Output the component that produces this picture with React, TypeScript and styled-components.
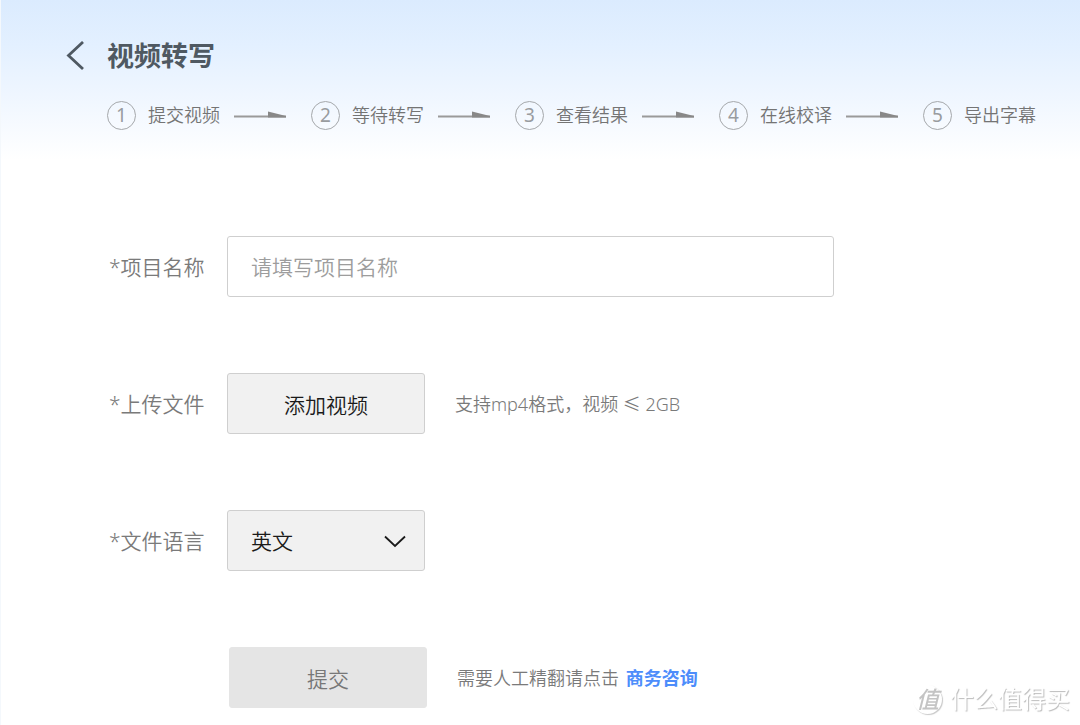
import React from "react";
import styled, { createGlobalStyle } from "styled-components";

const GlobalStyle = createGlobalStyle`
  * { box-sizing: border-box; }
  body {
    margin: 0;
    background: #fff;
    color: #7a7a7a;
    font-family: "Noto Sans", "Noto Sans CJK SC", sans-serif;
    font-weight: 350;
  }
  button, input, select { font: inherit; }
`;

const Page = styled.div`
  min-height: 100vh;
  border-left: 1px solid #f4f8fc;
  background: linear-gradient(#dbebfe 0, #e3f0ff 45px, #eff6ff 95px, #fff 160px) no-repeat;
`;

const Header = styled.header`
  padding: 36px 24px 0 64px;
`;

const TitleBar = styled.div`
  display: flex;
  align-items: center;
  gap: 22px;
  height: 40px;
`;

const BackButton = styled.button`
  display: flex;
  width: 20px;
  height: 30px;
  padding: 0;
  border: 0;
  background: none;
  color: #4f5962;
  cursor: pointer;
`;

const Title = styled.h1`
  margin: 0;
  color: #4f5962;
  font-size: 27px;
  font-weight: 700;
  line-height: 40px;
`;

const Steps = styled.ol`
  display: flex;
  gap: 24px;
  margin: 24px 0 0;
  padding: 0 0 0 42px;
  list-style: none;
`;

const Step = styled.li`
  display: flex;
  align-items: center;
  flex: none;
  height: 30px;
`;

const StepNumber = styled.span`
  display: flex;
  align-items: center;
  justify-content: center;
  width: 29px;
  height: 29px;
  border: 1px solid #a5a8ab;
  border-radius: 50%;
  color: #999c9f;
  font-size: 19px;
  font-weight: 400;
  line-height: 28px;
`;

const StepName = styled.span`
  width: 73px;
  margin: 0 13px 0 12px;
  color: #747474;
  font-size: 18px;
  line-height: 28px;
  white-space: nowrap;
`;

const Form = styled.form`
  display: flex;
  flex-direction: column;
  gap: 76px;
  padding: 106px 24px 16px 108px;
`;

const Row = styled.div`
  display: flex;
  align-items: center;
  min-height: 61px;
`;

const Label = styled.label`
  flex: none;
  width: 118px;
  font-size: 21px;
  line-height: 32px;
  white-space: nowrap;
`;

const TextInput = styled.input`
  flex: 0 1 607px;
  min-width: 0;
  height: 61px;
  padding: 0 23px;
  border: 1px solid #cfcfcf;
  border-radius: 3px;
  background: #fff;
  color: #222;
  font-size: 21px;
  &::placeholder { color: #9d9d9d; opacity: 1; }
`;

const Button = styled.button<{ $muted?: boolean }>`
  flex: none;
  width: 198px;
  height: 61px;
  padding: 0;
  border: 1px solid ${(p) => (p.$muted ? "#e5e5e5" : "#cfcfcf")};
  border-radius: 3px;
  background: ${(p) => (p.$muted ? "#e5e5e5" : "#f1f1f1")};
  color: ${(p) => (p.$muted ? "#777" : "#1a1a1a")};
  font-size: 21px;
`;

const SelectBox = styled.div`
  position: relative;
  width: 198px;
  height: 61px;
`;

const Select = styled.select`
  width: 100%;
  height: 100%;
  padding: 0 48px 0 23px;
  appearance: none;
  border: 1px solid #cfcfcf;
  border-radius: 3px;
  background: #f1f1f1;
  color: #1a1a1a;
  font-size: 21px;
`;

const Chevron = styled.svg`
  position: absolute;
  top: 25px;
  right: 19px;
  pointer-events: none;
`;

const Hint = styled.p`
  margin: 0 0 0 30px;
  font-size: 18px;
  line-height: 28px;
`;

const SubmitRow = styled(Row)`
  padding-left: 120px;
`;

const Link = styled.a`
  margin-left: 2px;
  color: #4d8dfb;
  font-weight: 700;
  text-decoration: none;
`;

const Watermark = styled.div`
  position: fixed;
  right: 10px;
  bottom: 10px;
  display: flex;
  align-items: center;
  gap: 8px;
  color: #fff;
  font-size: 24px;
  font-weight: 400;
  line-height: 32px;
  text-shadow: 1px 1px 1px #bbb;
  pointer-events: none;
`;

const Seal = styled.span`
  display: flex;
  align-items: center;
  justify-content: center;
  width: 29px;
  height: 29px;
  border-radius: 50%;
  box-shadow: 1px 1px 1px #c8c8c8;
  color: #c4c4c4;
  font-size: 23px;
  font-style: italic;
  font-weight: 500;
  text-shadow: none;
`;

const StepArrow = () => (
  <svg width="53" height="8" viewBox="0 0 53 8" aria-hidden="true">
    <path d="M0 4.5h52v2H0z" fill="#9a9a9a" />
    <path d="M34 0.5L52 5v1.5H34z" fill="#888" />
  </svg>
);

const steps = ["提交视频", "等待转写", "查看结果", "在线校译", "导出字幕"];

export default function App() {
  return (
    <>
      <GlobalStyle />
      <Page lang="zh-CN">
        <Header>
          <TitleBar>
            <BackButton type="button" aria-label="返回">
              <svg width="20" height="30" viewBox="0 0 20 30" fill="none" stroke="currentColor" strokeWidth="2.8">
                <path d="M18 1L3.5 14.5L18 28" />
              </svg>
            </BackButton>
            <Title>视频转写</Title>
          </TitleBar>
          <Steps>
            {steps.map((name, i) => (
              <Step key={name}>
                <StepNumber>{i + 1}</StepNumber>
                <StepName>{name}</StepName>
                {i < steps.length - 1 && <StepArrow />}
              </Step>
            ))}
          </Steps>
        </Header>
        <Form onSubmit={(e) => e.preventDefault()}>
          <Row>
            <Label htmlFor="project">*项目名称</Label>
            <TextInput id="project" type="text" placeholder="请填写项目名称" />
          </Row>
          <Row>
            <Label htmlFor="upload">*上传文件</Label>
            <Button id="upload" type="button">添加视频</Button>
            <Hint>支持mp4格式，视频 ≤ 2GB</Hint>
          </Row>
          <Row>
            <Label htmlFor="language">*文件语言</Label>
            <SelectBox>
              <Select id="language" defaultValue="en">
                <option value="en">英文</option>
              </Select>
              <Chevron width="22" height="14" viewBox="0 0 22 14" fill="none" stroke="#1a1a1a" strokeWidth="1.8" aria-hidden="true">
                <path d="M1 1.5L11 11L21 1.5" />
              </Chevron>
            </SelectBox>
          </Row>
          <SubmitRow>
            <Button type="submit" $muted>提交</Button>
            <Hint>
              需要人工精翻请点击 <Link href="#contact">商务咨询</Link>
            </Hint>
          </SubmitRow>
        </Form>
        <Watermark>
          <Seal>值</Seal>
          <span>什么值得买</span>
        </Watermark>
      </Page>
    </>
  );
}
